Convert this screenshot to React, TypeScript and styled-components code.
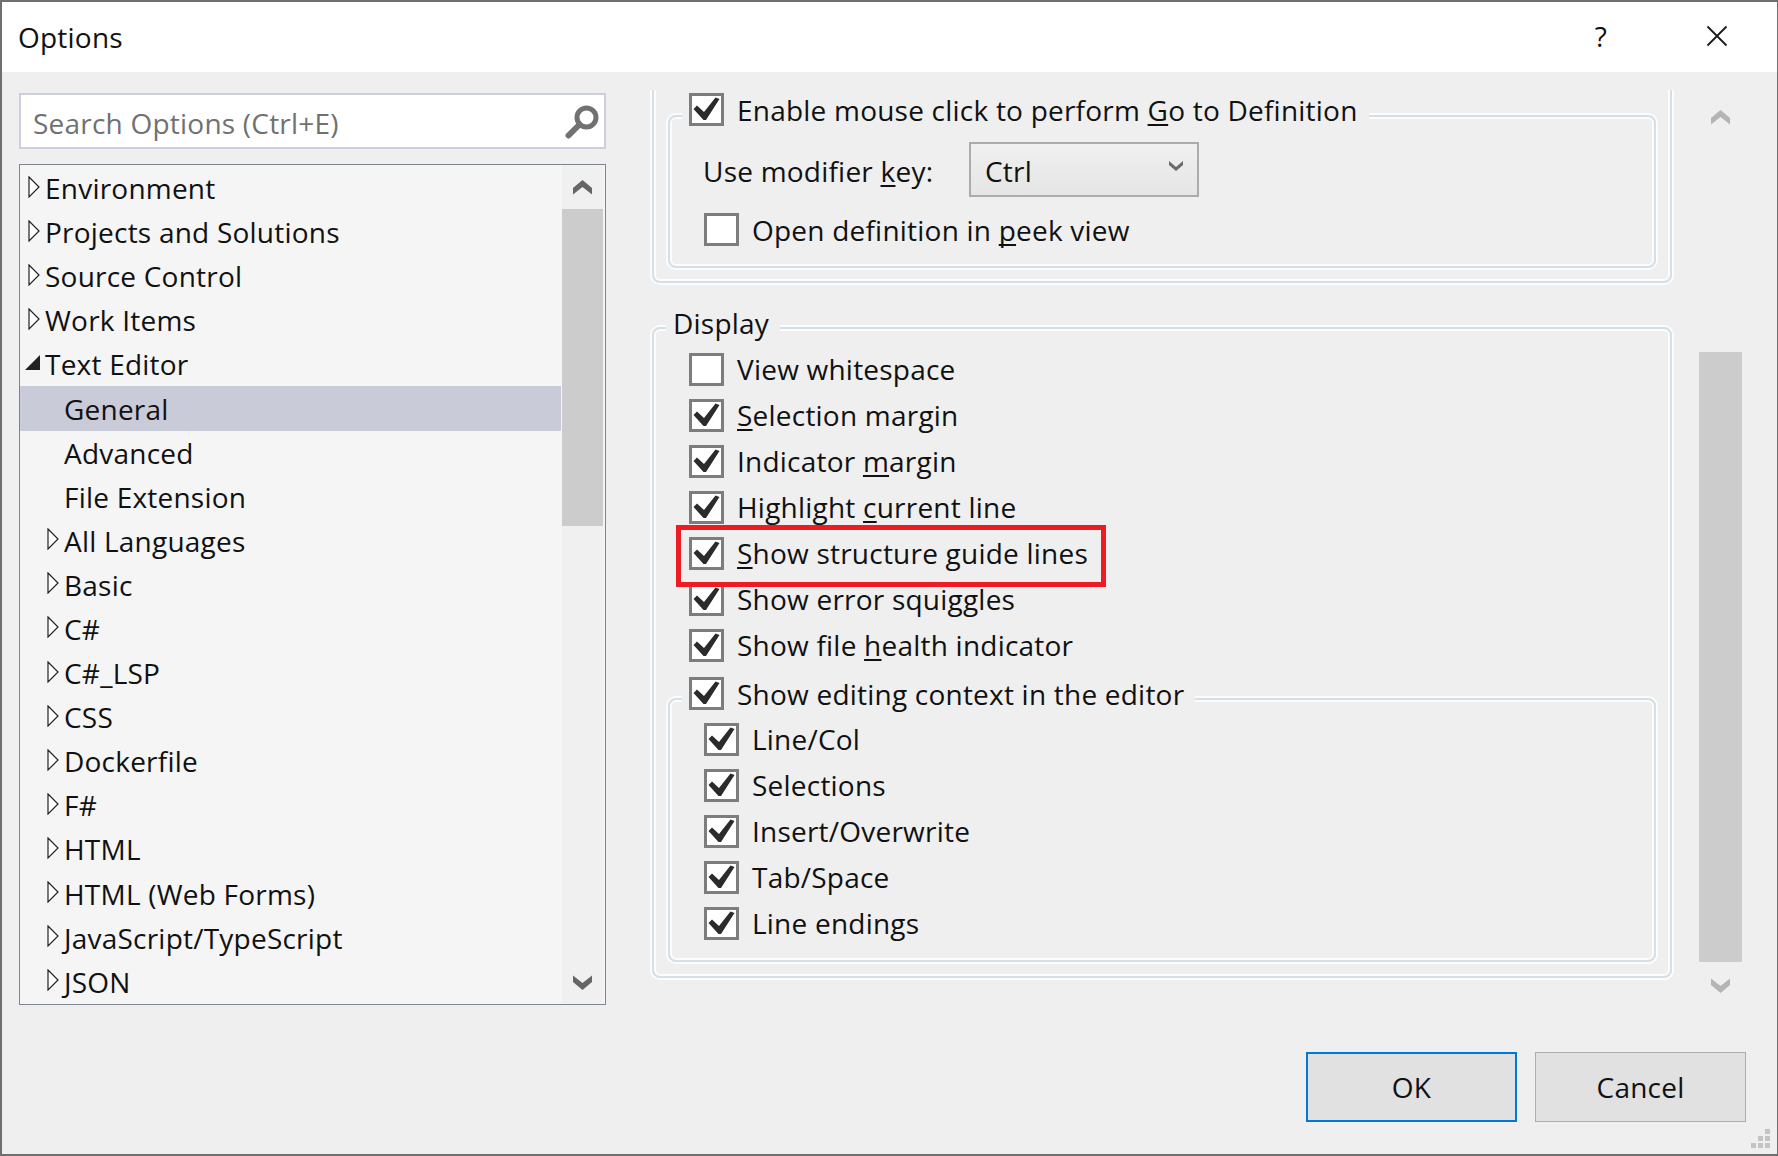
import React from 'react';
import styled, { createGlobalStyle } from 'styled-components';

const GlobalStyle = createGlobalStyle`
  html, body {
    margin: 0;
    padding: 0;
    background: #6f6f6f;
  }
  body {
    font-family: "Open Sans", "Noto Sans", sans-serif;
    font-size: 28px;
    letter-spacing: 0.22px;
    line-height: 36px;
    color: #111;
  }
  * {
    box-sizing: border-box;
  }
  u {
    text-decoration-thickness: 2px;
    text-decoration-skip-ink: none;
    text-underline-offset: 3px;
  }
`;

const DialogWindow = styled.div`
  position: relative;
  display: flex;
  flex-direction: column;
  width: 1778px;
  height: 1156px;
  border-style: solid;
  border-color: #6f6f6f;
  border-width: 2px 1px 2px 2px;
  background: #efefef;
`;

const TitleBar = styled.div`
  display: flex;
  align-items: center;
  height: 70px;
  padding-left: 16px;
  background: #fff;
`;

const Title = styled.div`
  flex: 1;
  margin-top: -1px;
`;

const HelpButton = styled.div`
  width: 40px;
  margin-right: 85px;
  margin-top: -3px;
  text-align: center;
  font-size: 28px;
`;

const CloseButton = styled.svg`
  width: 22px;
  height: 22px;
  margin-right: 49px;
  margin-top: -2px;
`;

const Columns = styled.div`
  display: flex;
  height: 933px;
  padding: 21px 0 0 17px;
`;

const LeftPane = styled.div`
  display: flex;
  flex-direction: column;
  gap: 15px;
  width: 587px;
`;

const SearchBox = styled.div`
  display: flex;
  align-items: center;
  justify-content: space-between;
  height: 56px;
  padding: 0 5px 0 12px;
  border: 2px solid #ccd0de;
  background: #fff;
  color: #717171;
`;

const SearchText = styled.span`
  margin-top: 3px;
`;

const SearchIcon = styled.svg`
  width: 34px;
  height: 34px;
  margin-top: 1px;
`;

const Tree = styled.div`
  flex: 1;
  display: flex;
  padding-right: 2px;
  border: 1px solid #7f8590;
  background: #f5f5f5;
`;

const TreeList = styled.div`
  flex: 1;
  padding-top: 1px;
  overflow: hidden;
`;

const TreeRow = styled.div<{ $level: number; $selected?: boolean }>`
  display: flex;
  align-items: center;
  height: 44.1px;
  padding-left: ${({ $level }) => 5 + $level * 19}px;
  margin-right: 1px;
  white-space: nowrap;
  background: ${({ $selected }) => ($selected ? '#c9cbd9' : 'transparent')};
`;

const ArrowSlot = styled.span`
  display: flex;
  flex: none;
  justify-content: flex-end;
  width: 15px;
  margin-right: 5px;
  margin-top: -3px;
`;

const TreeScrollbar = styled.div`
  display: flex;
  flex-direction: column;
  align-items: center;
  width: 41px;
  background: #f0f0f0;
`;

const ScrollButton = styled.div<{ $height: number }>`
  display: flex;
  flex: none;
  align-items: center;
  justify-content: center;
  width: 100%;
  height: ${({ $height }) => $height}px;
`;

const TreeThumb = styled.div`
  flex: none;
  width: 100%;
  height: 317px;
  background: #cccccc;
`;

const Spacer = styled.div`
  flex: 1;
`;

const ChevronIcon = styled.svg<{ $down?: boolean }>`
  transform: ${({ $down }) => ($down ? 'rotate(180deg)' : 'none')};
`;

const OptionsViewport = styled.div`
  flex: none;
  width: 1024px;
  height: 915px;
  margin: -3px 0 0 44px;
  padding: 0 2px;
  overflow: hidden;
`;

const GroupBox = styled.div<{ $top: number; $bottom: number; $pad?: number }>`
  margin-top: ${({ $top }) => $top}px;
  padding: 0 ${({ $pad }) => $pad ?? 0}px ${({ $bottom }) => $bottom}px;
  border: 2px solid #d5dfe6;
  border-radius: 8px;
  box-shadow: 0 0 0 2px #fbfcfd, inset 0 0 0 2px #fbfcfd;
`;

const GroupLegend = styled.div<{ $top: number; $left: number; $height: number }>`
  display: flex;
  align-items: center;
  gap: 13px;
  width: fit-content;
  height: ${({ $height }) => $height}px;
  margin: ${({ $top }) => $top}px 0 0 ${({ $left }) => $left}px;
  padding: 0 11px 0 7px;
  background: #efefef;
  white-space: nowrap;
`;

const ModifierRow = styled.div`
  display: flex;
  align-items: center;
  margin: 16px 0;
  padding-left: 33px;
`;

const ModifierLabel = styled.span`
  width: 266px;
  padding-top: 2px;
`;

const ModifierSelect = styled.div`
  display: flex;
  align-items: center;
  justify-content: space-between;
  width: 230px;
  height: 55px;
  padding: 2px 14px 0;
  border: 2px solid #acacac;
  background: linear-gradient(#f0f0f0, #e5e5e5);
`;

const SelectChevron = styled.svg`
  margin-top: -12px;
`;

const CheckRows = styled.div<{ $left: number; $top: number }>`
  margin-top: ${({ $top }) => $top}px;
  padding-left: ${({ $left }) => $left}px;
`;

const CheckRow = styled.div<{ $height: number }>`
  display: flex;
  align-items: center;
  gap: 13px;
  height: ${({ $height }) => $height}px;
  white-space: nowrap;
`;

const CheckBox = styled.span`
  display: flex;
  flex: none;
  align-items: center;
  justify-content: center;
  width: 35px;
  height: 33px;
  border: 3px solid #7d7d7d;
  background: #fff;
`;

const Highlight = styled.div`
  position: absolute;
  left: 674px;
  top: 523px;
  width: 430px;
  height: 62px;
  border: 5px solid #ed1c24;
  pointer-events: none;
`;

const RightScrollbar = styled.div`
  display: flex;
  flex-direction: column;
  flex: none;
  width: 43px;
  height: 915px;
  margin-left: 25px;
`;

const RightThumb = styled.div`
  flex: none;
  height: 610px;
  background: #cccccc;
`;

const Footer = styled.div`
  display: flex;
  justify-content: flex-end;
  gap: 18px;
  padding: 47px 31px 0 0;
`;

const DialogButton = styled.div<{ $primary?: boolean }>`
  display: flex;
  align-items: center;
  justify-content: center;
  width: 211px;
  height: 70px;
  background: #e1e1e1;
  border: ${({ $primary }) => ($primary ? '2px solid #0078d7' : '1.5px solid #adadad')};
`;

const ResizeGrip = styled.svg`
  position: absolute;
  right: 6px;
  bottom: 5px;
  width: 20px;
  height: 20px;
`;

const Chevron = ({ down, color }: { down?: boolean; color: string }) => (
  <ChevronIcon $down={down} width="19" height="15" viewBox="0 0 19 15">
    <path d="M0 8 L9.5 0 L19 8 V14.5 L9.5 7 L0 14.5 Z" fill={color} />
  </ChevronIcon>
);

const Check = () => (
  <svg width="29" height="27" viewBox="0 0 29 27">
    <path d="M1.5 13 L5 9.5 L12 16 L23.5 1.5 L27.5 3 L14 24 L11.5 24 Z" fill="#2b2b2b" />
  </svg>
);

const Option = ({
  checked = true,
  height = 46,
  children,
}: {
  checked?: boolean;
  height?: number;
  children: React.ReactNode;
}) => (
  <CheckRow $height={height}>
    <CheckBox>{checked && <Check />}</CheckBox>
    <span>{children}</span>
  </CheckRow>
);

const treeItems: {
  label: string;
  level: number;
  arrow?: 'closed' | 'open';
  selected?: boolean;
}[] = [
  { label: 'Environment', level: 0, arrow: 'closed' },
  { label: 'Projects and Solutions', level: 0, arrow: 'closed' },
  { label: 'Source Control', level: 0, arrow: 'closed' },
  { label: 'Work Items', level: 0, arrow: 'closed' },
  { label: 'Text Editor', level: 0, arrow: 'open' },
  { label: 'General', level: 1, selected: true },
  { label: 'Advanced', level: 1 },
  { label: 'File Extension', level: 1 },
  { label: 'All Languages', level: 1, arrow: 'closed' },
  { label: 'Basic', level: 1, arrow: 'closed' },
  { label: 'C#', level: 1, arrow: 'closed' },
  { label: 'C#_LSP', level: 1, arrow: 'closed' },
  { label: 'CSS', level: 1, arrow: 'closed' },
  { label: 'Dockerfile', level: 1, arrow: 'closed' },
  { label: 'F#', level: 1, arrow: 'closed' },
  { label: 'HTML', level: 1, arrow: 'closed' },
  { label: 'HTML (Web Forms)', level: 1, arrow: 'closed' },
  { label: 'JavaScript/TypeScript', level: 1, arrow: 'closed' },
  { label: 'JSON', level: 1, arrow: 'closed' },
];

const TreeArrow = ({ kind }: { kind?: 'closed' | 'open' }) => (
  <ArrowSlot>
    {kind === 'closed' && (
      <svg width="12" height="22" viewBox="0 0 12 22">
        <path d="M1 1 L11 11 L1 21 Z" fill="#fff" stroke="#222" strokeWidth="1.2" />
      </svg>
    )}
    {kind === 'open' && (
      <svg width="15" height="15" viewBox="0 0 15 15">
        <path d="M15 0 V15 H0 Z" fill="#222" />
      </svg>
    )}
  </ArrowSlot>
);

export default function App() {
  return (
    <>
      <GlobalStyle />
      <DialogWindow>
        <TitleBar>
          <Title>Options</Title>
          <HelpButton>?</HelpButton>
          <CloseButton viewBox="0 0 22 22">
            <path d="M1.5 1.5 L20.5 20.5 M20.5 1.5 L1.5 20.5" stroke="#1a1a1a" strokeWidth="1.8" />
          </CloseButton>
        </TitleBar>

        <Columns>
          <LeftPane>
            <SearchBox>
              <SearchText>Search Options (Ctrl+E)</SearchText>
              <SearchIcon viewBox="0 0 34 34">
                <circle cx="21.5" cy="12.5" r="9.5" fill="none" stroke="#717171" strokeWidth="5" />
                <path d="M14.5 19.5 L3.5 30.5" stroke="#717171" strokeWidth="6" strokeLinecap="round" />
              </SearchIcon>
            </SearchBox>
            <Tree>
              <TreeList>
                {treeItems.map((item) => (
                  <TreeRow key={item.label} $level={item.level} $selected={item.selected}>
                    <TreeArrow kind={item.arrow} />
                    {item.label}
                  </TreeRow>
                ))}
              </TreeList>
              <TreeScrollbar>
                <ScrollButton $height={44}>
                  <Chevron color="#666" />
                </ScrollButton>
                <TreeThumb />
                <Spacer />
                <ScrollButton $height={44}>
                  <Chevron down color="#666" />
                </ScrollButton>
              </TreeScrollbar>
            </Tree>
          </LeftPane>

          <OptionsViewport>
            <GroupBox $top={-27} $bottom={13} $pad={14}>
              <GroupBox $top={50} $bottom={20}>
                <GroupLegend $top={-24} $left={12} $height={33}>
                  <CheckBox>
                    <Check />
                  </CheckBox>
                  <span>
                    Enable mouse click to perform <u>G</u>o to Definition
                  </span>
                </GroupLegend>
                <ModifierRow>
                  <ModifierLabel>
                    Use modifier <u>k</u>ey:
                  </ModifierLabel>
                  <ModifierSelect>
                    <span>Ctrl</span>
                    <SelectChevron width="14" height="12" viewBox="0 0 14 12">
                      <path d="M0 2 L7 8 L14 2 V6 L7 12 L0 6 Z" fill="#6a6a6a" />
                    </SelectChevron>
                  </ModifierSelect>
                </ModifierRow>
                <CheckRows $left={34} $top={0}>
                  <Option checked={false} height={33}>
                    Open definition in <u>p</u>eek view
                  </Option>
                </CheckRows>
              </GroupBox>
            </GroupBox>

            <GroupBox $top={44} $bottom={14} $pad={14}>
              <GroupLegend $top={-24} $left={-2} $height={36}>
                Display
              </GroupLegend>
              <CheckRows $left={21} $top={5}>
                <Option checked={false}>View whitespace</Option>
                <Option>
                  <u>S</u>election margin
                </Option>
                <Option>
                  Indicator <u>m</u>argin
                </Option>
                <Option>
                  Highlight <u>c</u>urrent line
                </Option>
                <Option>
                  <u>S</u>how structure guide lines
                </Option>
                <Option>Show error squiggles</Option>
                <Option>
                  Show file <u>h</u>ealth indicator
                </Option>
              </CheckRows>
              <GroupBox $top={30} $bottom={14}>
                <GroupLegend $top={-23} $left={12} $height={33}>
                  <CheckBox>
                    <Check />
                  </CheckBox>
                  <span>Show editing context in the editor</span>
                </GroupLegend>
                <CheckRows $left={34} $top={6}>
                  <Option>Line/Col</Option>
                  <Option>Selections</Option>
                  <Option>Insert/Overwrite</Option>
                  <Option>Tab/Space</Option>
                  <Option>Line endings</Option>
                </CheckRows>
              </GroupBox>
            </GroupBox>
          </OptionsViewport>

          <RightScrollbar>
            <ScrollButton $height={48}>
              <Chevron color="#b4b4b4" />
            </ScrollButton>
            <Spacer />
            <RightThumb />
            <ScrollButton $height={46}>
              <Chevron down color="#b4b4b4" />
            </ScrollButton>
          </RightScrollbar>
        </Columns>

        <Footer>
          <DialogButton $primary>OK</DialogButton>
          <DialogButton>Cancel</DialogButton>
        </Footer>

        <Highlight />

        <ResizeGrip viewBox="0 0 20 20">
          <path
            d="M14 0 H19 V5 H14 Z M7 7 H12 V12 H7 Z M14 7 H19 V12 H14 Z M0 14 H5 V19 H0 Z M7 14 H12 V19 H7 Z M14 14 H19 V19 H14 Z"
            fill="#c4c4c4"
          />
        </ResizeGrip>
      </DialogWindow>
    </>
  );
}
